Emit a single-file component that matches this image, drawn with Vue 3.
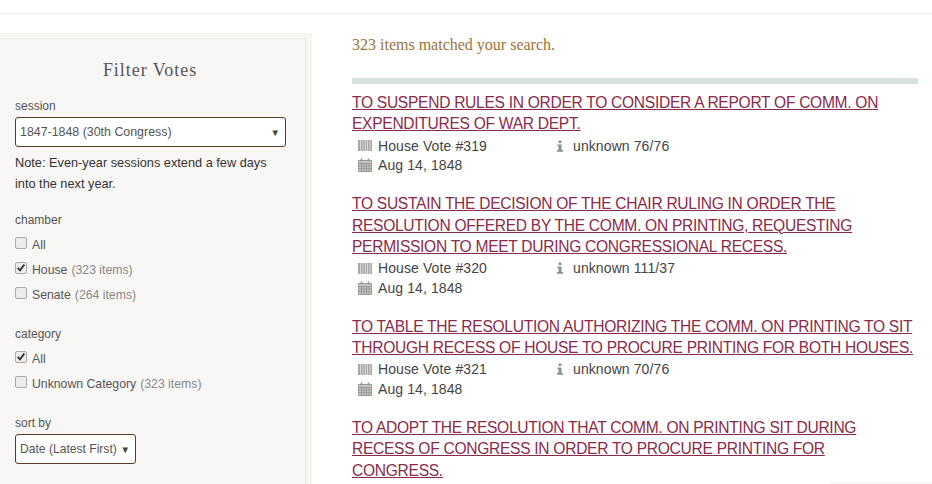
<script setup>
const votes = [
  { title: 'TO SUSPEND RULES IN ORDER TO CONSIDER A REPORT OF COMM. ON EXPENDITURES OF WAR DEPT.', num: 319, res: '76/76' },
  { title: 'TO SUSTAIN THE DECISION OF THE CHAIR RULING IN ORDER THE RESOLUTION OFFERED BY THE COMM. ON PRINTING, REQUESTING PERMISSION TO MEET DURING CONGRESSIONAL RECESS.', num: 320, res: '111/37' },
  { title: 'TO TABLE THE RESOLUTION AUTHORIZING THE COMM. ON PRINTING TO SIT THROUGH RECESS OF HOUSE TO PROCURE PRINTING FOR BOTH HOUSES.', num: 321, res: '70/76' },
  { title: 'TO ADOPT THE RESOLUTION THAT COMM. ON PRINTING SIT DURING RECESS OF CONGRESS IN ORDER TO PROCURE PRINTING FOR CONGRESS.', num: 322, res: '' },
]
const chambers = [
  { label: 'All', count: '', on: false },
  { label: 'House', count: '(323 items)', on: true },
  { label: 'Senate', count: '(264 items)', on: false },
]
const categories = [
  { label: 'All', count: '', on: true },
  { label: 'Unknown Category', count: '(323 items)', on: false },
]
</script>

<template>
  <div class="page">
    <div class="topbar"></div>
    <div class="columns">
      <aside class="panel">
        <div class="panel-inner">
          <h2 class="panel-title">Filter Votes</h2>
          <div class="label">session</div>
          <div class="select wide">
            <span>1847-1848 (30th Congress)</span><span class="arrow">▼</span>
          </div>
          <p class="note">Note: Even-year sessions extend a few days into the next year.</p>

          <div class="label chamber">chamber</div>
          <div v-for="c in chambers" :key="c.label" class="check">
            <span class="box" :class="{ on: c.on }">
              <svg v-if="c.on" viewBox="0 0 12 12" width="11" height="11"><path d="M2 6.5 L4.8 9.5 L10 2.5" fill="none" stroke="#333" stroke-width="2.2" /></svg>
            </span>
            <span>{{ c.label }}</span>
            <span v-if="c.count" class="count">{{ c.count }}</span>
          </div>

          <div class="label category">category</div>
          <div v-for="c in categories" :key="c.label" class="check">
            <span class="box" :class="{ on: c.on }">
              <svg v-if="c.on" viewBox="0 0 12 12" width="11" height="11"><path d="M2 6.5 L4.8 9.5 L10 2.5" fill="none" stroke="#333" stroke-width="2.2" /></svg>
            </span>
            <span>{{ c.label }}</span>
            <span v-if="c.count" class="count">{{ c.count }}</span>
          </div>

          <div class="label sort">sort by</div>
          <div class="select narrow">
            <span>Date (Latest First)</span><span class="arrow">▼</span>
          </div>
        </div>
      </aside>

      <main class="results">
        <div class="matched">323 items matched your search.</div>
        <div class="rule"></div>
        <article v-for="v in votes" :key="v.num" class="vote">
          <a class="vote-title" href="#">{{ v.title }}</a>
          <div v-if="v.res" class="meta">
            <div class="meta-row">
              <span class="cell first">
                <svg class="icon" viewBox="0 0 14 11" width="14" height="11">
                  <path d="M0 0H14V11H0Z" fill="#a8a8a8" />
                  <path d="M2.5 0V11M5 0V11M7.5 0V11M9.5 0V11M12 0V11" stroke="#e4e4e4" stroke-width="0.8" fill="none" />
                </svg>
                <span>House Vote #{{ v.num }}</span>
              </span>
              <span class="cell">
                <svg class="icon info" viewBox="0 0 8 12" width="8" height="12">
                  <path d="M2.5 0.5H5.5V3H2.5ZM1.5 4.5H5.5V10H7V11.8H1V10H2.5V6.2H1.5Z" fill="#8f8f8f" />
                </svg>
                <span>unknown {{ v.res }}</span>
              </span>
            </div>
            <div class="meta-row">
              <span class="cell">
                <svg class="icon" viewBox="0 0 14 14" width="14" height="14">
                  <path d="M0.5 2.5H13.5V13.5H0.5Z" fill="#c8c8c8" stroke="#999" />
                  <path d="M0.5 5.5H13.5M0.5 8H13.5M0.5 10.7H13.5M3.5 5.5V13.5M6 5.5V13.5M8.5 5.5V13.5M11 5.5V13.5" stroke="#999" fill="none" />
                  <path d="M3.5 0.5V3.5M10.5 0.5V3.5" stroke="#999" stroke-width="1.6" fill="none" />
                </svg>
                <span>Aug 14, 1848</span>
              </span>
            </div>
          </div>
        </article>
      </main>
    </div>
    <div class="corner-shade"></div>
  </div>
</template>

<style>
html, body { margin: 0; background: #fff; overflow: hidden; }
</style>

<style scoped>
.page {
  position: relative;
  width: 932px;
  height: 484px;
  overflow: hidden;
  font-family: "Liberation Sans", Arial, sans-serif;
  color: #333;
}
.topbar {
  height: 13px;
  border-bottom: 1px solid #eeeeee;
}
.columns {
  display: flex;
  align-items: flex-start;
  padding-top: 19px;
}
.panel {
  width: 312px;
  height: 500px;
  box-sizing: border-box;
  flex: none;
  background: #f7f5f2;
  padding: 5px 6px 0 0;
}
.panel-inner {
  height: 100%;
  box-sizing: border-box;
  background: #f8f7f5;
  border-top: 1px solid #ece9e3;
  border-right: 1px solid #ece9e3;
  padding: 20px 20px 0 15px;
}
.panel-title {
  margin: 0;
  width: 270px;
  text-align: center;
  font-family: "Liberation Serif", serif;
  font-weight: 400;
  font-size: 18px;
  line-height: 22px;
  color: #555;
  letter-spacing: 0.95px;
}
.label {
  font-size: 12px;
  line-height: 16px;
  color: #555;
  margin-top: 17px;
}
.select {
  box-sizing: border-box;
  height: 30px;
  margin-top: 3px;
  display: flex;
  align-items: center;
  justify-content: space-between;
  background: #fff;
  border: 1px solid #5a3d1c;
  border-radius: 3px;
  padding: 0 5px 0 4px;
  font-size: 12.4px;
  color: #555;
}
.wide { width: 271px; }
.narrow { width: 121px; font-size: 12.1px; }
.arrow { font-size: 9.5px; color: #444; }
.note {
  margin: 5px 0 0;
  width: 265px;
  font-size: 12.75px;
  line-height: 21px;
  color: #333;
}
.label.chamber { margin-top: 18px; }
.label.category { margin-top: 19px; }
.label.sort { margin-top: 19px; }
.check {
  display: flex;
  align-items: center;
  gap: 5px;
  height: 25px;
  font-size: 12.25px;
  color: #555;
}
.label + .check { margin-top: 4px; }
.count { color: #888; margin-left: -1px; }
.box {
  box-sizing: border-box;
  width: 12px;
  height: 12px;
  margin-top: -4px;
  border: 1px solid #aaa;
  border-radius: 2px;
  background: #ececec;
  display: flex;
  align-items: center;
  justify-content: center;
}
.results {
  margin-left: 40px;
  width: 566px;
}
.matched {
  font-family: "Liberation Serif", serif;
  font-size: 16px;
  line-height: 26px;
  color: #9a7339;
  margin-top: -1px;
}
.rule {
  height: 6px;
  background: #d6e0dc;
  margin: 20px 0 8px;
}
.vote { margin-bottom: 18.33px; }
.vote-title {
  display: block;
  font-size: 15.6px;
  letter-spacing: -0.3px;
  line-height: 21.43px;
  color: #8a2b4a;
  text-decoration: underline;
}
.meta { padding-left: 6px; font-size: 14px; letter-spacing: 0.1px; color: #444; margin-top: 1px; }
.meta-row { display: flex; height: 19.5px; align-items: center; }
.cell { display: flex; align-items: center; gap: 6px; }
.first { width: 198px; }
.icon { flex: none; }
.info { margin-right: 3px; }
.corner-shade {
  position: absolute;
  right: 0;
  bottom: 0;
  width: 102px;
  height: 2px;
  background: #f6f6f6;
}
</style>
